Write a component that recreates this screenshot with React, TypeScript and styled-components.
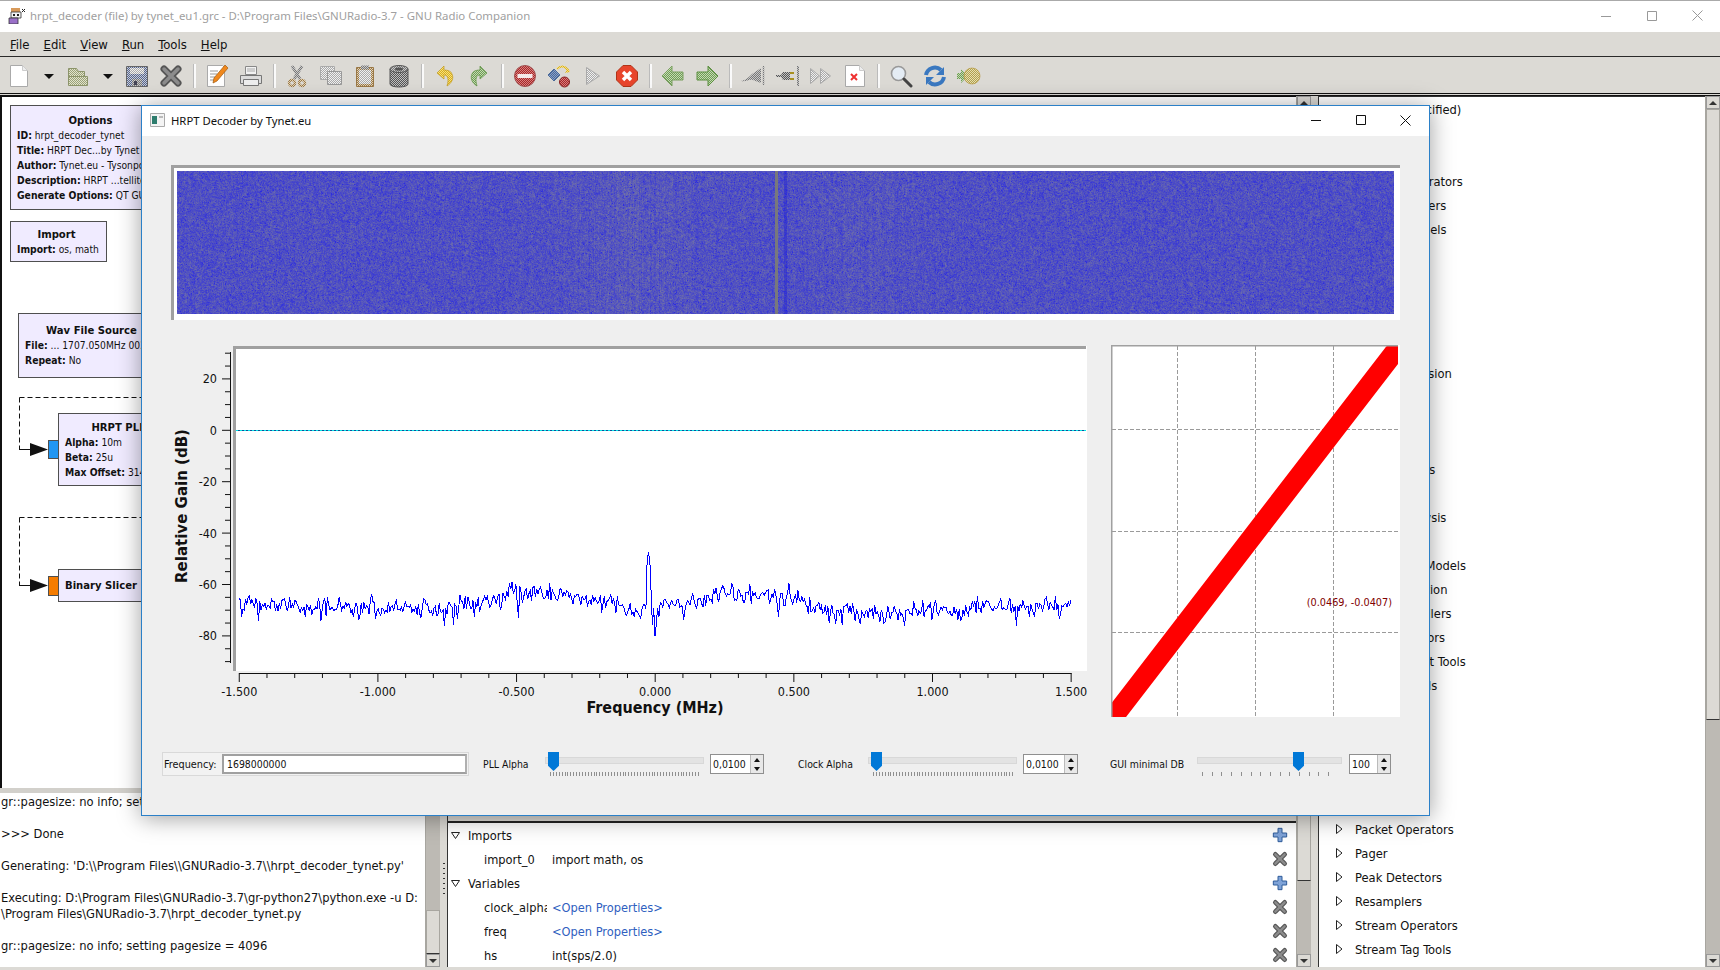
import React, { useEffect, useRef } from 'react'
import styled, { createGlobalStyle } from 'styled-components'

const uiFont = `"DejaVu Sans Condensed", "DejaVu Sans", sans-serif`

const GlobalStyle = createGlobalStyle`
    html, body {
        margin: 0;
        padding: 0;
        overflow: hidden;
        background: #dcdad5;
    }
    * { box-sizing: border-box; }
`

const Page = styled.div`
    position: relative;
    width: 1720px;
    height: 970px;
    display: flex;
    flex-direction: column;
    overflow: hidden;
    background: #dcdad5;
    font-family: ${uiFont};
    font-stretch: condensed;
    color: #111;
`

const TitleBar = styled.div`
    height: 32px;
    flex: none;
    display: flex;
    align-items: center;
    background: #fff;
    border-top: 1px solid #aaa;
    padding: 0 0 2px 8px;
    gap: 5px;
`

const TitleText = styled.span`
    font-family: "Noto Sans", sans-serif;
    font-size: 11.4px;
    color: #a0a0a0;
`

const WinButtons = styled.div`
    margin-left: auto;
    display: flex;
`

const WinButton = styled.div<{ $w?: number }>`
    width: ${p => p.$w || 45.5}px;
    height: 28px;
    display: flex;
    align-items: center;
    justify-content: center;
`

const MenuBar = styled.div`
    height: 25px;
    flex: none;
    display: flex;
    align-items: center;
    padding-left: 10px;
    gap: 14px;
    font-size: 13px;
    border-bottom: 1.5px solid #2a2a2a;
`

const MenuItem = styled.span`
    display: inline-block;
    &::first-letter { text-decoration: underline; }
`

const Toolbar = styled.div`
    height: 39px;
    flex: none;
    display: flex;
    align-items: center;
    padding: 2px 0 0 2px;
    border-bottom: 3px double #111;
`

const ToolSlot = styled.div`
    width: 34px;
    height: 28px;
    display: flex;
    align-items: center;
    justify-content: center;
`

const ArrowSlot = styled.div`
    width: 25px;
    display: flex;
    justify-content: center;
    &::after {
        content: '';
        border-left: 5px solid transparent;
        border-right: 5px solid transparent;
        border-top: 5px solid #111;
    }
`

const ToolSep = styled.div`
    width: 12px;
    height: 24px;
    display: flex;
    justify-content: center;
    &::after {
        content: '';
        width: 2px;
        background: #fafafa;
        border-left: 1px solid #bbb;
    }
`

const Workspace = styled.div`
    flex: 1;
    min-height: 0;
    display: flex;
`

const LeftPane = styled.div`
    width: 1311px;
    flex: none;
    display: flex;
    flex-direction: column;
`

const TopRow = styled.div`
    height: 692px;
    flex: none;
    display: flex;
`

const Editor = styled.div`
    position: relative;
    flex: 1;
    background: #fff;
    border-left: 2px solid #111;
    border-top: 1px solid #111;
    overflow: hidden;
`

const BlockNode = styled.div<{ $x: number; $y: number; $w: number; $h: number; $pad: number }>`
    position: absolute;
    left: ${p => p.$x}px;
    top: ${p => p.$y}px;
    width: ${p => p.$w}px;
    height: ${p => p.$h}px;
    padding: ${p => p.$pad}px 0 0 6px;
    background: #f0ebff;
    border: 1.5px solid #4f4f4f;
    font-size: 10.2px;
    line-height: 15px;
`

const BlockTitle = styled.div<{ $left?: boolean; $nudge?: number }>`
    font-weight: bold;
    font-size: 11.2px;
    text-align: ${p => (p.$left ? 'left' : 'center')};
    white-space: nowrap;
    margin-right: ${p => p.$nudge || 0}px;
`

const BlockLine = styled.div`
    white-space: nowrap;
    & > b { font-size: 10.3px; }
`

const Port = styled.div<{ $x: number; $y: number; $h: number; $color: string }>`
    position: absolute;
    left: ${p => p.$x}px;
    top: ${p => p.$y}px;
    width: 11px;
    height: ${p => p.$h}px;
    background: ${p => p.$color};
    border: 1px solid #4f4f4f;
`

const Wires = styled.svg`
    position: absolute;
    left: 0;
    top: 296px;
`

const Scrollbar = styled.div`
    width: 15px;
    flex: none;
    display: flex;
    flex-direction: column;
    background: #bdbab4;
    border-left: 1px solid #a8a6a0;
`

const ScrollThumb = styled.div<{ $h: number }>`
    height: ${p => p.$h}px;
    flex: none;
    background: #dcdad5;
    border: 1px solid #a8a6a0;
    border-bottom-color: #333;
`

const ScrollFill = styled.div`
    flex: 1;
`

const ScrollArrow = styled.div<{ $down?: boolean }>`
    height: 13px;
    flex: none;
    display: flex;
    align-items: center;
    justify-content: center;
    background: #dcdad5;
    border: 1px solid #999;
    &::after {
        content: '';
        border-left: 4px solid transparent;
        border-right: 4px solid transparent;
        ${p => (p.$down ? 'border-top: 4px solid #333;' : 'border-bottom: 4px solid #333;')}
    }
`

const HSplit = styled.div`
    height: 5px;
    flex: none;
    background: #d2d0cb;
`

const BottomRow = styled.div`
    flex: 1;
    min-height: 0;
    display: flex;
    padding-bottom: 3px;
`

const Console = styled.div`
    width: 425px;
    flex: none;
    background: #fff;
    font-size: 12.8px;
    line-height: 16px;
    padding: 1px 0 0 1px;
    overflow: hidden;
`

const ConsoleLine = styled.div`
    min-height: 16px;
    white-space: nowrap;
`

const VSplit = styled.div<{ $dots: boolean }>`
    width: 7px;
    flex: none;
    display: flex;
    align-items: center;
    justify-content: center;
    &::after {
        content: '';
        width: 2px;
        height: 34px;
        ${p => p.$dots && 'background: repeating-linear-gradient(#333 0 1px, transparent 1px 5px);'}
    }
`

const VarPanel = styled.div`
    flex: 1;
    background: #fff;
    border-left: 1px solid #333;
    display: flex;
    flex-direction: column;
    font-size: 12.7px;
`

const VarHeader = styled.div`
    height: 30px;
    flex: none;
    background: #dcdad5;
    border-bottom: 2px solid #222;
`

const VarRow = styled.div<{ $indent: number }>`
    height: 24px;
    flex: none;
    display: flex;
    align-items: center;
    padding-left: ${p => p.$indent}px;
    padding-right: 8px;
`

const VarGroup = styled.span`
    margin-left: 8px;
`

const VarName = styled.span`
    width: 63px;
    flex: none;
    overflow: hidden;
    white-space: nowrap;
    margin-right: 5px;
`

const VarLink = styled.span`
    color: #2f5fc0;
`

const RowAction = styled.span`
    margin-left: auto;
    display: flex;
`

const TreePane = styled.div`
    flex: 1;
    display: flex;
    padding-bottom: 3px;
    min-height: 0;
`

const TreeList = styled.div`
    flex: 1;
    background: #fff;
    border-left: 1px solid #333;
    border-top: 1px solid #333;
    padding-left: 3px;
    font-size: 12.8px;
    overflow: hidden;
`

const TreeRow = styled.div<{ $root?: boolean }>`
    height: 24px;
    display: flex;
    align-items: center;
    gap: 11px;
    padding-left: ${p => (p.$root ? 14 : 13)}px;
    white-space: nowrap;
`

/* dialog floats over the main window */
const Dialog = styled.div`
    position: absolute;
    left: 141px;
    top: 105px;
    width: 1289px;
    height: 711px;
    display: flex;
    flex-direction: column;
    background: #efefef;
    border: 1px solid #2b80c8;
    box-shadow: 0 2px 22px rgba(0, 0, 0, 0.38);
`

const DialogTitle = styled.div`
    height: 30px;
    flex: none;
    display: flex;
    align-items: center;
    gap: 6px;
    padding: 0 1px 2px 8px;
    background: #fff;
`

const DialogCaption = styled.span`
    font-family: "Noto Sans", sans-serif;
    font-size: 11.3px;
    color: #111;
`

const DialogBody = styled.div`
    flex: 1;
    display: flex;
    flex-direction: column;
    padding: 29px 29px 0 29px;
`

const WaterfallFrame = styled.div`
    width: 1229px;
    height: 155px;
    flex: none;
    background: #fff;
    border-left: 3px solid #a0a0a0;
    border-top: 3px solid #a0a0a0;
    padding: 3px 6px 6px 3px;
    & > canvas { display: block; }
`

const PlotRow = styled.div`
    display: flex;
    margin-top: 25px;
    gap: 21px;
`

const ChartSvg = styled.svg`
    display: block;
    flex: none;
    font-family: ${uiFont};
    font-stretch: condensed;
`

const Controls = styled.div`
    display: flex;
    align-items: center;
    height: 24px;
    margin-top: 32px;
    margin-left: -9px;
    font-size: 10.4px;
`

const FreqBox = styled.div`
    width: 307px;
    height: 24px;
    flex: none;
    display: flex;
    align-items: center;
    background: #f2f2f2;
    border: 1px solid #d9d9d9;
    padding: 0 1px;
`

const FreqLabel = styled.span`
    width: 58px;
    flex: none;
    font-size: 10.8px;
`

const FreqInput = styled.div`
    flex: 1;
    height: 20px;
    background: #fff;
    border: 2px solid #a0a0a0;
    border-right-color: #b0b0b0;
    display: flex;
    align-items: center;
    padding-left: 3px;
`

const CtlLabel = styled.span<{ $w: number; $ml: number }>`
    width: ${p => p.$w}px;
    margin-left: ${p => p.$ml}px;
    flex: none;
    white-space: nowrap;
`

const Slider = styled.div<{ $w: number; $step: number; $mr: number }>`
    position: relative;
    width: ${p => p.$w}px;
    height: 24px;
    flex: none;
    margin-right: ${p => p.$mr}px;
    &::before {
        content: '';
        position: absolute;
        left: 0;
        right: 0;
        top: 5px;
        height: 5px;
        background: #e3e3e3;
        border: 1px solid #d8d8d8;
    }
    &::after {
        content: '';
        position: absolute;
        left: 5px;
        right: 4px;
        top: 20px;
        height: 4px;
        background: repeating-linear-gradient(90deg, #8f8f8f 0 1px, transparent 1px ${p => p.$step}px);
    }
`

const SliderThumb = styled.div<{ $x: number }>`
    position: absolute;
    left: ${p => p.$x}px;
    top: 0;
    width: 11px;
    height: 19px;
    background: #0078d7;
    clip-path: polygon(0 0, 100% 0, 100% 72%, 50% 100%, 0 72%);
    z-index: 1;
`

const Spin = styled.div<{ $w: number }>`
    width: ${p => p.$w}px;
    height: 20px;
    flex: none;
    display: flex;
    align-items: center;
    background: #fff;
    border: 1.5px solid #8f8f8f;
    padding-left: 2px;
`

const SpinValue = styled.span`
    flex: 1;
`

const SpinButtons = styled.div`
    width: 13px;
    height: 100%;
    display: flex;
    flex-direction: column;
    background: #e8e8e8;
    border-left: 1px solid #bbb;
`

const SpinButton = styled.div<{ $down?: boolean }>`
    flex: 1;
    display: flex;
    align-items: center;
    justify-content: center;
    &::after {
        content: '';
        border-left: 3px solid transparent;
        border-right: 3px solid transparent;
        ${p => (p.$down ? 'border-top: 4px solid #111;' : 'border-bottom: 4px solid #111;')}
    }
`

const ExpanderSvg = styled.svg`
    flex: none;
`

const rng = (seed: number) => () => {
    seed = (seed + 0x6d2b79f5) | 0
    let t = Math.imul(seed ^ (seed >>> 15), 1 | seed)
    t = (t + Math.imul(t ^ (t >>> 7), 61 | t)) ^ t
    return ((t ^ (t >>> 14)) >>> 0) / 4294967296
}

const envelope: [number, number][] = [
    [239, 604], [300, 606], [370, 607], [440, 609], [480, 603], [500, 597], [512, 590], [530, 594], [560, 591],
    [600, 601], [640, 610], [665, 604], [693, 600], [727, 592], [777, 595], [827, 607], [860, 612], [893, 613],
    [927, 608], [960, 610], [993, 606], [1027, 607], [1060, 606], [1071, 606],
]

const spikes: [number, number][] = [
    [259, 621], [321, 621], [358, 620], [371, 589], [372, 594], [444, 626], [453, 625], [509, 583], [512, 582],
    [516, 584], [518, 618], [647, 558], [648.5, 554], [650, 560], [651, 592], [653, 625], [655, 636], [656, 625],
    [683, 620], [732, 583], [779, 617], [789, 583], [836, 624], [905, 626], [978, 596], [1017, 626], [1059, 619],
]

const envAt = (x: number) => {
    for (let i = 1; i < envelope.length; i++) {
        if (x <= envelope[i][0]) {
            const [x0, y0] = envelope[i - 1]
            const [x1, y1] = envelope[i]
            return y0 + ((y1 - y0) * (x - x0)) / (x1 - x0)
        }
    }
    return 606
}

const tracePath = () => {
    const r = rng(77)
    const pts: string[] = []
    const step = 1.3
    for (let x = 239; x <= 1071; x += step) {
        let y = envAt(x) + (r() + r() - 1) * 11
        if (r() < 0.1) y += 4 + r() * 7
        for (const [sx, sy] of spikes) {
            if (Math.abs(sx - x) <= step / 2) y = sy
        }
        pts.push(`${x.toFixed(1)} ${y.toFixed(1)}`)
    }
    return 'M' + pts.join('L')
}

const Waterfall = () => {
    const ref = useRef<HTMLCanvasElement>(null)
    useEffect(() => {
        const ctx = ref.current?.getContext('2d')
        if (!ctx) return
        const w = 1217
        const h = 143
        const img = ctx.createImageData(w, h)
        const r = rng(12345)
        const col = new Float32Array(w)
        for (let x = 0; x < w; x++) {
            const px = x + 177
            const a = (px - 630) / 75
            const b = (px - 860) / 60
            const busy = Math.exp(-a * a)
            const busy2 = Math.exp(-b * b)
            col[x] = 0.42 + 0.08 * busy + 0.05 * busy2 + (r() - 0.5) * (0.05 + 0.16 * busy + 0.1 * busy2)
        }
        let above = new Float32Array(w).fill(0.45)
        for (let y = 0; y < h; y++) {
            let prev = 0.45
            const row = new Float32Array(w)
            for (let x = 0; x < w; x++) {
                const px = x + 177
                let v = col[x] + (r() + r() - 1) * 0.5
                v = v * 0.6 + prev * 0.2 + above[x] * 0.2
                prev = v
                row[x] = v
                if (r() < 0.01) v -= 0.6
                v = Math.max(0, Math.min(1, v))
                let red = 44 + 84 * v
                let blue = 224 - 70 * v
                if (px >= 775 && px <= 777) {
                    red = 120
                    blue = 124
                } else if (px >= 784 && px <= 786) {
                    red *= 0.72
                    blue = Math.min(255, blue + 10)
                }
                const i = (y * w + x) * 4
                img.data[i] = red
                img.data[i + 1] = red
                img.data[i + 2] = blue
                img.data[i + 3] = 255
            }
            above = row
        }
        ctx.putImageData(img, 0, 0)
    }, [])
    return <canvas ref={ref} width={1217} height={143} />
}

const dithers: [string, string, string][] = [
    ['olive', '#9aa078', '#e2e4cc'],
    ['blue', '#55658c', '#c8ccd8'],
    ['gray', '#777', '#c8c8c8'],
    ['dark', '#555', '#c0c0c0'],
    ['brown', '#9a7846', '#e0d2b8'],
    ['yellow', '#d8ac20', '#f6e27a'],
    ['green', '#6f9a58', '#c4dcb0'],
    ['red', '#a82828', '#d88080'],
    ['steel', '#4a6a9a', '#8aa0c8'],
    ['light', '#aaa', '#f0f0f0'],
    ['khaki', '#b0a050', '#e8e0b0'],
]

const HiddenDefs = styled.svg`
    position: absolute;
`

const Patterns = () => (
    <HiddenDefs width="0" height="0">
        <defs>
            {dithers.map(([id, a, b]) => (
                <pattern key={id} id={`d-${id}`} width="2" height="2" patternUnits="userSpaceOnUse">
                    <rect width="2" height="2" fill={b} />
                    <rect width="1" height="1" fill={a} />
                    <rect x="1" y="1" width="1" height="1" fill={a} />
                </pattern>
            ))}
        </defs>
    </HiddenDefs>
)

const Ico = ({ children, s = 24 }: { children: React.ReactNode; s?: number }) => (
    <svg width={s} height={s} viewBox="0 0 24 24">{children}</svg>
)

const XMark = ({ s = 24 }: { s?: number }) => (
    <Ico s={s}>
        <path d="M5 5L19 19M19 5L5 19" stroke="#555" strokeWidth="7" strokeLinecap="round" />
        <path d="M5 5L19 19M19 5L5 19" stroke="#8c8c8c" strokeWidth="3.5" strokeLinecap="round" />
    </Ico>
)

const PlusMark = () => (
    <Ico s={16}>
        <path d="M9 2h6v7h7v6h-7v7H9v-7H2V9h7z" fill="#7fa3d8" stroke="#2f5c9a" strokeWidth="1.5" />
    </Ico>
)

const tools: (string | React.ReactNode)[] = [
    <Ico><path d="M3.5 1.5h12l5 5v16h-17z" fill="#fff" stroke="#aaa" /><path d="M15.5 1.5v5h5" fill="#eee" stroke="#ccc" /></Ico>,
    'arrow',
    <Ico><path d="M2.5 4.5h8l2 3h6v5h-16z" fill="url(#d-olive)" stroke="#8c946a" /><path d="M2.5 12.5h19v9h-19z" fill="url(#d-olive)" stroke="#8c946a" /></Ico>,
    'arrow',
    <Ico><path d="M1.5 2.5h21v20h-21z" fill="url(#d-blue)" stroke="#666" /><path d="M5 4h14v6H5z" fill="url(#d-light)" /><path d="M7 15h10v7H7z" fill="url(#d-gray)" /><path d="M9 17h3v4H9z" fill="#445" /></Ico>,
    <XMark />,
    'sep',
    <Ico><path d="M2.5 1.5h15l2 2v19h-17z" fill="#fff" stroke="#aaa" /><path d="M5 7h8M5 10h7M5 13h5M5 16h4" stroke="#999" /><path d="M20 1l3 3-11 13-4 2 1-5z" fill="#f0881c" stroke="#a05a10" strokeWidth=".7" /></Ico>,
    <Ico><path d="M6.5 2.5h11v8h-11z" fill="#f2f2f2" stroke="#888" /><path d="M8 5h8M8 7h8" stroke="#aaa" /><path d="M1.5 11.5h21v8h-21z" fill="#dcdcdc" stroke="#777" /><path d="M4.5 15.5h15v6h-15z" fill="#eee" stroke="#777" /></Ico>,
    'sep',
    <Ico><path d="M7 2l8 13M17 2L9 15" stroke="url(#d-gray)" strokeWidth="3" /><circle cx="7" cy="19" r="3" fill="none" stroke="url(#d-brown)" strokeWidth="2.5" /><circle cx="17" cy="19" r="3" fill="none" stroke="url(#d-brown)" strokeWidth="2.5" /></Ico>,
    <Ico><path d="M1.5 2.5h14v13h-14z" fill="url(#d-light)" stroke="#aaa" /><path d="M8.5 7.5h14v13h-14z" fill="url(#d-light)" stroke="#999" /></Ico>,
    <Ico><path d="M3.5 3.5h17v19h-17z" fill="url(#d-brown)" stroke="#9a7846" /><path d="M6 6h12v14H6z" fill="url(#d-light)" /><path d="M8 1.5h8v4H8z" fill="url(#d-gray)" /></Ico>,
    <Ico><path d="M3 5v15c0 4 18 4 18 0V5z" fill="url(#d-dark)" stroke="#555" /><ellipse cx="12" cy="5" rx="9" ry="3.5" fill="url(#d-gray)" stroke="#555" /><ellipse cx="12" cy="5" rx="4" ry="1.5" fill="#555" /></Ico>,
    'sep',
    <Ico><path d="M11 2L4 9l7 6v-4c4 0 5 4 3 11 5-3 7-8 5-12-1-3-4-4-8-4z" fill="url(#d-yellow)" stroke="#c09a20" strokeWidth=".7" /></Ico>,
    <Ico><path d="M13 2l7 7-7 6v-4c-4 0-5 4-3 11-5-3-7-8-5-12 1-3 4-4 8-4z" fill="url(#d-green)" stroke="#5c9040" strokeWidth=".7" /></Ico>,
    'sep',
    <Ico><circle cx="12" cy="12" r="10.5" fill="url(#d-red)" stroke="#a05050" /><path d="M4.5 10h15v4h-15z" fill="#f4e8e8" /></Ico>,
    <Ico><path d="M1 11l6-6 6 6-6 6z" fill="url(#d-steel)" stroke="#4a6a9a" /><circle cx="17.5" cy="18" r="5" fill="url(#d-red)" stroke="#882222" /><path d="M10 5c4-4 9-3 11 2" fill="none" stroke="url(#d-yellow)" strokeWidth="2" /><path d="M18 9l5-1-2-4z" fill="url(#d-yellow)" /></Ico>,
    <Ico><path d="M5.5 3.5v17l13-8.5z" fill="url(#d-light)" stroke="#aaa" /></Ico>,
    <Ico><path d="M8 1.5h8l6.5 6.5v8L16 22.5H8L1.5 16V8z" fill="#e8452c" stroke="#b03418" /><path d="M8 8l8 8M16 8l-8 8" stroke="#fff" strokeWidth="3.4" /></Ico>,
    'sep',
    <Ico><path d="M11 2L1 12l10 10v-6h11V8H11z" fill="url(#d-green)" stroke="#7aa060" /></Ico>,
    <Ico><path d="M13 2l10 10-10 10v-6H2V8h11z" fill="url(#d-green)" stroke="#5c9040" /></Ico>,
    'sep',
    <Ico><path d="M0 17c5-1 8-4 11-7l9-6v15l-8-3c-4-1-7 2-12 1z" fill="url(#d-gray)" /><path d="M22.5 2v19" stroke="url(#d-gray)" strokeWidth="1.5" /></Ico>,
    <Ico><path d="M1 11h5l2-3h7v8H8l-2-3H1z" fill="url(#d-dark)" /><path d="M15 9h4M15 15h4" stroke="#a89020" strokeWidth="2" /><path d="M23 2v20" stroke="url(#d-gray)" strokeWidth="2" /></Ico>,
    <Ico><path d="M1.5 4.5v15l9-7.5z" fill="url(#d-light)" stroke="#aaa" /><path d="M11.5 4.5v15l10-7.5z" fill="url(#d-light)" stroke="#aaa" /></Ico>,
    <Ico><path d="M2.5 1.5h14l5 5v16h-19z" fill="#fff" stroke="#aaa" /><path d="M16.5 1.5v5h5" fill="#eee" stroke="#ccc" /><path d="M8 10l6 6M14 10l-6 6" stroke="#ee3030" strokeWidth="2" /></Ico>,
    'sep',
    <Ico><circle cx="9.5" cy="9.5" r="7" fill="#e4ecf4" stroke="#999" strokeWidth="1.6" /><path d="M15 15l7 7" stroke="#444" strokeWidth="3" strokeLinecap="round" /></Ico>,
    <Ico><path d="M3 11a9 9 0 0 1 15-5" fill="none" stroke="#3a78c0" strokeWidth="4" /><path d="M21 3v8h-8z" fill="#3a78c0" /><path d="M21 13a9 9 0 0 1-15 5" fill="none" stroke="#3a78c0" strokeWidth="4" /><path d="M3 21v-8h8z" fill="#3a78c0" /></Ico>,
    <Ico><path d="M0 9h4V5l7 7-7 7v-4H0z" fill="url(#d-green)" /><circle cx="15" cy="12" r="8" fill="url(#d-khaki)" stroke="#b09030" strokeWidth=".6" /></Ico>,
]

const Expander = ({ open }: { open?: boolean }) => (
    <ExpanderSvg width="9" height="10" viewBox="0 0 9 10">
        <path d={open ? 'M.5 2.5h8l-4 6z' : 'M1.5 .5v9l5.5-4.5z'} fill="none" stroke="#222" />
    </ExpanderSvg>
)

// blank names are rows that sit fully behind the dialog
const treeRows = [
    '', '', 'Boolean Operators', 'Channel Coders', 'Channel Models', '', '', '', '', '', 'Digital Television', '', '', '',
    'File Operators', '', 'Fourier Analysis', '', 'Impairment Models', 'Instrumentation', 'Level Controllers',
    'Math Operators', 'Measurement Tools', 'Message Tools', '', '', 'OFDM Tools', '', '', 'Packet Operators', 'Pager',
    'Peak Detectors', 'Resamplers', 'Stream Operators', 'Stream Tag Tools',
]

const consoleLines = [
    'gr::pagesize: no info; setting pagesize = 4096',
    '',
    '>>> Done',
    '',
    "Generating: 'D:\\\\Program Files\\\\GNURadio-3.7\\\\hrpt_decoder_tynet.py'",
    '',
    'Executing: D:\\Program Files\\GNURadio-3.7\\gr-python27\\python.exe -u D:',
    '\\Program Files\\GNURadio-3.7\\hrpt_decoder_tynet.py',
    '',
    'gr::pagesize: no info; setting pagesize = 4096',
]

const yTicks = Array.from({ length: 25 }, (_, i) => 30 - i * 5)
const xTicks = Array.from({ length: 31 }, (_, i) => -15 + i)
const yOf = (db: number) => 430.3 - db * 2.57
const xOf = (t: number) => 655.2 + t * 27.73

const FreqChart = () => (
    <ChartSvg width="919" height="375" viewBox="171 345 919 375">
        <rect x="233" y="346" width="854" height="325" fill="#fff" />
        <path d="M234.5 671V347.5H1086" fill="none" stroke="#a0a0a0" strokeWidth="3" />
        <path d="M230.5 352V663" stroke="#111" />
        {yTicks.map(db => (
            <path key={db} d={`M${db % 20 === 0 ? 222 : 225} ${yOf(db)}H230`} stroke="#111" />
        ))}
        {yTicks.filter(db => db % 20 === 0).map(db => (
            <text key={db} x="217" y={yOf(db) + 4.5} fontSize="12.5" textAnchor="end" fill="#111">{db}</text>
        ))}
        <path d="M239 673.5H1071.5" stroke="#111" />
        {xTicks.map(t => (
            <path key={t} d={`M${xOf(t)} 673V${t % 5 === 0 ? 682 : 678}`} stroke="#111" />
        ))}
        {xTicks.filter(t => t % 5 === 0).map(t => (
            <text key={t} x={xOf(t)} y="696" fontSize="12.5" textAnchor="middle" fill="#111">{(t / 10).toFixed(3)}</text>
        ))}
        <text x="655" y="713" fontSize="16" fontWeight="bold" textAnchor="middle" fill="#111">Frequency (MHz)</text>
        <text transform="translate(187 506) rotate(-90)" fontSize="16.7" fontWeight="bold" textAnchor="middle" fill="#111">Relative Gain (dB)</text>
        <path d="M236 430.5H1086" stroke="#0f4f9a" />
        <path d="M236 430.5H1086" stroke="#00e8e8" strokeDasharray="2 2" />
        <path d={tracePath()} fill="none" stroke="#0000ff" shapeRendering="crispEdges" />
    </ChartSvg>
)

const Constellation = () => (
    <ChartSvg width="289" height="372" viewBox="1111 345 289 372">
        <defs>
            <clipPath id="const-clip"><rect x="1112" y="346" width="286" height="371" /></clipPath>
        </defs>
        <rect x="1111" y="345" width="289" height="372" fill="#fff" />
        <path d="M1177.5 346V717M1255.5 346V717M1333.5 346V717M1112 429.5H1398M1112 531.5H1398M1112 632.5H1398" stroke="#9a9a9a" strokeDasharray="4 2" />
        <g clipPath="url(#const-clip)">
            <path d="M1106.5 726L1393 354" stroke="#ff0000" strokeWidth="20" strokeLinecap="round" />
        </g>
        <path d="M1111.5 717V345.5H1398" fill="none" stroke="#a0a0a0" strokeWidth="2" />
        <text x="1392" y="606" fontSize="10.8" textAnchor="end" fill="#800000">(0.0469, -0.0407)</text>
    </ChartSvg>
)

function App() {
    return (
        <Page>
            <GlobalStyle />
            <Patterns />
            <TitleBar>
                <svg width="17" height="17" viewBox="0 0 17 17">
                    <path d="M3 1h9v4H3z" fill="#d89a5a" />
                    <path d="M3 5h10v6H3z" fill="#f4f4f4" stroke="#333" strokeWidth=".8" />
                    <path d="M5 7h2v2H5zM9 7h2v2H9z" fill="#222" />
                    <path d="M1 11h9v6H1z" fill="#9a70c8" stroke="#333" strokeWidth=".8" />
                    <path d="M14 2l3 3M17 2l-3 3" stroke="#222" />
                </svg>
                <TitleText>hrpt_decoder (file) by tynet_eu1.grc - D:\Program Files\GNURadio-3.7 - GNU Radio Companion</TitleText>
                <WinButtons>
                    <WinButton>
                        <svg width="10" height="10"><path d="M0 5.5h10" stroke="#999" /></svg>
                    </WinButton>
                    <WinButton>
                        <svg width="10" height="10"><path d="M.5.5h9v9h-9z" fill="none" stroke="#999" /></svg>
                    </WinButton>
                    <WinButton>
                        <svg width="11" height="11"><path d="M.5.5l10 10M10.5.5l-10 10" stroke="#999" /></svg>
                    </WinButton>
                </WinButtons>
            </TitleBar>

            <MenuBar>
                <MenuItem>File</MenuItem>
                <MenuItem>Edit</MenuItem>
                <MenuItem>View</MenuItem>
                <MenuItem>Run</MenuItem>
                <MenuItem>Tools</MenuItem>
                <MenuItem>Help</MenuItem>
            </MenuBar>

            <Toolbar>
                {tools.map((t, i) =>
                    t === 'arrow' ? <ArrowSlot key={i} /> : t === 'sep' ? <ToolSep key={i} /> : <ToolSlot key={i}>{t}</ToolSlot>
                )}
            </Toolbar>

            <Workspace>
                <LeftPane>
                    <TopRow>
                        <Editor>
                            <BlockNode $x={8} $y={8} $w={155} $h={105} $pad={7}>
                                <BlockTitle>Options</BlockTitle>
                                <BlockLine><b>ID:</b> hrpt_decoder_tynet</BlockLine>
                                <BlockLine><b>Title:</b> HRPT Dec...by Tynet</BlockLine>
                                <BlockLine><b>Author:</b> Tynet.eu - Tysonpower</BlockLine>
                                <BlockLine><b>Description:</b> HRPT ...tellites</BlockLine>
                                <BlockLine><b>Generate Options:</b> QT GUI</BlockLine>
                            </BlockNode>
                            <BlockNode $x={8} $y={124} $w={97} $h={41} $pad={5}>
                                <BlockTitle $nudge={10}>Import</BlockTitle>
                                <BlockLine><b>Import:</b> os, math</BlockLine>
                            </BlockNode>
                            <BlockNode $x={16} $y={216} $w={141} $h={65} $pad={9}>
                                <BlockTitle>Wav File Source</BlockTitle>
                                <BlockLine><b>File:</b> ... 1707.050MHz 002.wav</BlockLine>
                                <BlockLine><b>Repeat:</b> No</BlockLine>
                            </BlockNode>
                            <Wires width="200" height="300" viewBox="0 0 200 300">
                                <path d="M17.5 4.5H140V-4M17.5 4.5V57" fill="none" stroke="#111" strokeDasharray="5 3" />
                                <path d="M17.5 124.5H140M17.5 124.5V193" fill="none" stroke="#111" strokeDasharray="5 3" />
                                <path d="M17 56.5H30M17 192.5H30" stroke="#111" />
                                <path d="M28 50l18 6.5-18 6.5zM28 186l18 6.5-18 6.5z" fill="#111" />
                            </Wires>
                            <Port $x={46} $y={343} $h={19} $color="#2196f3" />
                            <BlockNode $x={56} $y={316} $w={115} $h={73} $pad={6}>
                                <BlockTitle>HRPT PLL</BlockTitle>
                                <BlockLine><b>Alpha:</b> 10m</BlockLine>
                                <BlockLine><b>Beta:</b> 25u</BlockLine>
                                <BlockLine><b>Max Offset:</b> 3141</BlockLine>
                            </BlockNode>
                            <Port $x={46} $y={479} $h={20} $color="#f57c00" />
                            <BlockNode $x={56} $y={472} $w={120} $h={33} $pad={8}>
                                <BlockTitle $left>Binary Slicer</BlockTitle>
                            </BlockNode>
                        </Editor>
                        <Scrollbar>
                            <ScrollArrow />
                            <ScrollFill />
                        </Scrollbar>
                    </TopRow>
                    <HSplit />
                    <BottomRow>
                        <Console>
                            {consoleLines.map((l, i) => <ConsoleLine key={i}>{l}</ConsoleLine>)}
                        </Console>
                        <Scrollbar>
                            <ScrollFill />
                            <ScrollThumb $h={44} />
                            <ScrollArrow $down />
                        </Scrollbar>
                        <VSplit $dots />
                        <VarPanel>
                            <VarHeader />
                            <VarRow $indent={3}>
                                <Expander open />
                                <VarGroup>Imports</VarGroup>
                                <RowAction><PlusMark /></RowAction>
                            </VarRow>
                            <VarRow $indent={36}>
                                <VarName>import_0</VarName>
                                <span>import math, os</span>
                                <RowAction><XMark s={16} /></RowAction>
                            </VarRow>
                            <VarRow $indent={3}>
                                <Expander open />
                                <VarGroup>Variables</VarGroup>
                                <RowAction><PlusMark /></RowAction>
                            </VarRow>
                            <VarRow $indent={36}>
                                <VarName>clock_alpha</VarName>
                                <VarLink>&lt;Open Properties&gt;</VarLink>
                                <RowAction><XMark s={16} /></RowAction>
                            </VarRow>
                            <VarRow $indent={36}>
                                <VarName>freq</VarName>
                                <VarLink>&lt;Open Properties&gt;</VarLink>
                                <RowAction><XMark s={16} /></RowAction>
                            </VarRow>
                            <VarRow $indent={36}>
                                <VarName>hs</VarName>
                                <span>int(sps/2.0)</span>
                                <RowAction><XMark s={16} /></RowAction>
                            </VarRow>
                        </VarPanel>
                        <Scrollbar>
                            <ScrollThumb $h={88} />
                            <ScrollFill />
                            <ScrollArrow $down />
                        </Scrollbar>
                    </BottomRow>
                </LeftPane>
                <VSplit $dots={false} />
                <TreePane>
                    <TreeList>
                        <TreeRow $root>(no module specified)</TreeRow>
                        {treeRows.map((name, i) => (
                            <TreeRow key={i}>
                                {name && <Expander />}
                                {name}
                            </TreeRow>
                        ))}
                    </TreeList>
                    <Scrollbar>
                        <ScrollArrow />
                        <ScrollThumb $h={611} />
                        <ScrollFill />
                        <ScrollArrow $down />
                    </Scrollbar>
                </TreePane>
            </Workspace>

            <Dialog>
                <DialogTitle>
                    <svg width="15" height="14" viewBox="0 0 15 14">
                        <path d="M.5.5h14v13H.5z" fill="#f4f4f4" stroke="#aaa" />
                        <path d="M2 3h5v8H2z" fill="#2e7d6e" />
                        <path d="M9 3h4v2H9z" fill="#bbb" />
                    </svg>
                    <DialogCaption>HRPT Decoder by Tynet.eu</DialogCaption>
                    <WinButtons>
                        <WinButton $w={45}>
                            <svg width="10" height="10"><path d="M0 5.5h10" stroke="#111" /></svg>
                        </WinButton>
                        <WinButton $w={45}>
                            <svg width="10" height="10"><path d="M.5.5h9v9h-9z" fill="none" stroke="#111" /></svg>
                        </WinButton>
                        <WinButton $w={45}>
                            <svg width="11" height="11"><path d="M.5.5l10 10M10.5.5l-10 10" stroke="#111" /></svg>
                        </WinButton>
                    </WinButtons>
                </DialogTitle>
                <DialogBody>
                    <WaterfallFrame><Waterfall /></WaterfallFrame>
                    <PlotRow>
                        <FreqChart />
                        <Constellation />
                    </PlotRow>
                    <Controls>
                        <FreqBox>
                            <FreqLabel>Frequency:</FreqLabel>
                            <FreqInput>1698000000</FreqInput>
                        </FreqBox>
                        <CtlLabel $w={62} $ml={14}>PLL Alpha</CtlLabel>
                        <Slider $w={159} $step={2.9} $mr={6}><SliderThumb $x={3} /></Slider>
                        <Spin $w={54}><SpinValue>0,0100</SpinValue><SpinButtons><SpinButton /><SpinButton $down /></SpinButtons></Spin>
                        <CtlLabel $w={70} $ml={34}>Clock Alpha</CtlLabel>
                        <Slider $w={148.5} $step={2.9} $mr={6.5}><SliderThumb $x={3} /></Slider>
                        <Spin $w={55}><SpinValue>0,0100</SpinValue><SpinButtons><SpinButton /><SpinButton $down /></SpinButtons></Spin>
                        <CtlLabel $w={87} $ml={32}>GUI minimal DB</CtlLabel>
                        <Slider $w={145} $step={9.7} $mr={7}><SliderThumb $x={96} /></Slider>
                        <Spin $w={42}><SpinValue>100</SpinValue><SpinButtons><SpinButton /><SpinButton $down /></SpinButtons></Spin>
                    </Controls>
                </DialogBody>
            </Dialog>
        </Page>
    )
}

export default App
